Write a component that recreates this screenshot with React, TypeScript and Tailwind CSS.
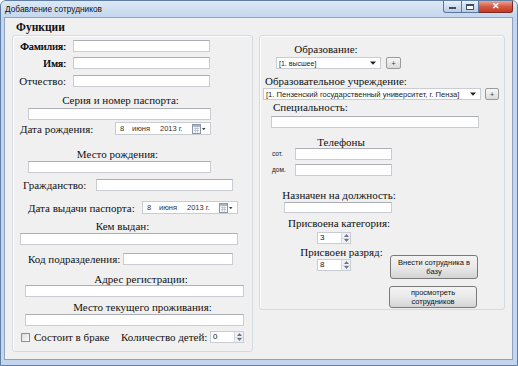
const serif = "font-['Liberation_Serif',serif] text-[11px] leading-[12px] text-[#111] whitespace-nowrap";
const sans = "font-['Liberation_Sans',Arial,sans-serif]";

function Field({ className = "" }: { className?: string }) {
  return <div className={`h-[12px] shrink-0 border border-[#c9ccd3] border-t-[#abaeb6] bg-white ${className}`} />;
}

function CalIcon() {
  return (
    <svg width="14" height="10" viewBox="0 0 14 10" className="shrink-0">
      <rect x="0.5" y="0.5" width="8" height="9" fill="#f4f6f9" stroke="#8c97a6" />
      <rect x="1" y="1" width="7" height="2" fill="#aab6c6" />
      <path d="M2 4.5h5M2 6.5h5M3.5 3.5v5M5.5 3.5v5" stroke="#b9c2ce" strokeWidth="0.8" />
      <path d="M10 4h3.5l-1.75 2.2z" fill="#444" />
    </svg>
  );
}

function DatePick() {
  return (
    <div className={`flex h-[13px] w-[96px] shrink-0 items-center border border-[#c9ccd3] bg-white text-[7.5px] leading-[9px] text-[#333] ${sans}`}>
      <span className="ml-[4px] w-[12px]">8</span>
      <span className="w-[28px]">июня</span>
      <span className="w-[32px]">2013 г.</span>
      <CalIcon />
    </div>
  );
}

function Arrow() {
  return (
    <svg width="6" height="4" viewBox="0 0 6 4" className="shrink-0">
      <path d="M0 0.5h6L3 3.8z" fill="#222" />
    </svg>
  );
}

function Combo({ text, className = "" }: { text: string; className?: string }) {
  return (
    <div className={`flex h-[12px] shrink-0 items-center justify-between border border-[#c9ccd3] bg-white pl-[2px] pr-[4px] leading-[9px] text-[#222] ${sans} ${className}`}>
      <span className="whitespace-nowrap">{text}</span>
      <Arrow />
    </div>
  );
}

function PlusBtn({ className = "" }: { className?: string }) {
  return (
    <div className={`flex h-[12px] shrink-0 items-center justify-center rounded-[2px] border border-[#9a9a9a] bg-linear-to-b from-[#f7f7f7] to-[#dadada] text-[7px] leading-[7px] text-[#333] ${sans} ${className}`}>
      +
    </div>
  );
}

function Numeric({ value, className = "" }: { value: string; className?: string }) {
  return (
    <div className={`flex h-[12px] w-[34px] shrink-0 items-stretch border border-[#c9ccd3] bg-white ${className}`}>
      <span className={`pl-[2px] text-[8px] leading-[10px] text-[#111] ${sans}`}>{value}</span>
      <div className="ml-auto flex w-[9px] flex-col border-l border-[#d5d8de]">
        <div className="flex flex-1 items-center justify-center border-b border-[#d5d8de] bg-[#eff1f4]">
          <svg width="5" height="3" viewBox="0 0 5 3"><path d="M0 3L2.5 0L5 3z" fill="#6a778a" /></svg>
        </div>
        <div className="flex flex-1 items-center justify-center bg-[#eff1f4]">
          <svg width="5" height="3" viewBox="0 0 5 3"><path d="M0 0L2.5 3L5 0z" fill="#6a778a" /></svg>
        </div>
      </div>
    </div>
  );
}

function WinButton({ lines, className = "" }: { lines: string[]; className?: string }) {
  return (
    <div className={`flex w-[88px] shrink-0 flex-col items-center justify-center rounded-[3px] border border-[#7a7a7a] bg-linear-to-b from-[#f3f3f3] via-[#e9e9e9] to-[#d4d4d4] text-[7.5px] leading-[9px] text-[#111] ${sans} ${className}`}>
      {lines.map((l) => (
        <span key={l}>{l}</span>
      ))}
    </div>
  );
}

function LeftGroup() {
  return (
    <div className="flex h-[317px] w-[241px] shrink-0 flex-col rounded-[3px] border border-[#d3dbe0] shadow-[inset_1px_1px_0_#fff]">
      <div className="mt-[4px] flex h-[12px] items-center">
        <span className={`w-[53px] text-right [text-shadow:0.35px_0_0_#111] ${serif}`}>Фамилия:</span>
        <Field className="ml-[7px] w-[137px]" />
      </div>
      <div className="mt-[5px] flex h-[12px] items-center">
        <span className={`w-[53px] text-right [text-shadow:0.35px_0_0_#111] ${serif}`}>Имя:</span>
        <Field className="ml-[7px] w-[137px]" />
      </div>
      <div className="mt-[6px] flex h-[12px] items-center">
        <span className={`w-[53px] text-right ${serif}`}>Отчество:</span>
        <Field className="ml-[7px] w-[137px]" />
      </div>
      <div className={`mt-[7px] h-[12px] w-[215px] text-center ${serif}`}>Серия и номер паспорта:</div>
      <Field className="ml-[15px] mt-[2px] w-[183px]" />
      <div className="mt-[2px] flex h-[13px] items-center">
        <span className={`ml-[7px] w-[95px] ${serif}`}>Дата рождения:</span>
        <DatePick />
      </div>
      <div className={`mt-[13px] h-[12px] w-[209px] text-center ${serif}`}>Место рождения:</div>
      <Field className="ml-[15px] mt-[1px] w-[183px]" />
      <div className="mt-[6px] flex h-[12px] items-center">
        <span className={`ml-[10px] w-[73px] ${serif}`}>Гражданство:</span>
        <Field className="w-[137px]" />
      </div>
      <div className="mt-[10px] flex h-[13px] items-center">
        <span className={`ml-[15px] w-[114px] ${serif}`}>Дата выдачи паспорта:</span>
        <DatePick />
      </div>
      <div className={`mt-[6px] h-[12px] w-[219px] text-center ${serif}`}>Кем выдан:</div>
      <Field className="ml-[7px] mt-[1px] w-[218px]" />
      <div className="mt-[8px] flex h-[12px] items-center">
        <span className={`ml-[15px] w-[95px] ${serif}`}>Код подразделения:</span>
        <Field className="w-[110px]" />
      </div>
      <div className={`ml-[20px] mt-[8px] h-[12px] w-[216px] text-center ${serif}`}>Адрес регистрации:</div>
      <Field className="ml-[12px] w-[219px]" />
      <div className={`ml-[20px] mt-[4px] h-[12px] w-[219px] text-center ${serif}`}>Место текущего проживания:</div>
      <Field className="ml-[12px] mt-[1px] w-[219px]" />
      <div className="mt-[5px] flex h-[12px] items-center">
        <div className="ml-[8px] h-[9px] w-[9px] shrink-0 border border-[#8e8f8f] bg-linear-to-br from-[#dcdcdc] to-[#fbfbfb]" />
        <span className={`ml-[4px] w-[87px] ${serif}`}>Состоит в браке</span>
        <span className={`w-[89px] ${serif}`}>Количество детей:</span>
        <Numeric value="0" />
      </div>
    </div>
  );
}

function RightGroup() {
  return (
    <div className="ml-[6px] flex h-[275px] w-[246px] shrink-0 flex-col rounded-[3px] border border-[#d3dbe0] shadow-[inset_1px_1px_0_#fff]">
      <div className={`mt-[7px] h-[12px] w-[132px] text-center ${serif}`}>Образование:</div>
      <div className="mt-[2px] flex items-center">
        <Combo text="[1. высшее]" className="ml-[16px] w-[105px] text-[7px]" />
        <PlusBtn className="ml-[5px] w-[15px]" />
      </div>
      <div className={`ml-[5px] mt-[6px] h-[12px] ${serif}`}>Образовательное учреждение:</div>
      <div className="mt-[1px] flex items-center">
        <Combo text="[1. Пензенский государственный университет, г. Пенза]" className="ml-[3px] w-[218px] text-[7.6px]" />
        <PlusBtn className="ml-[4px] w-[14px]" />
      </div>
      <div className={`ml-[13px] mt-[1px] h-[12px] ${serif}`}>Специальность:</div>
      <Field className="ml-[11px] mt-[3px] w-[208px]" />
      <div className={`mt-[8px] h-[12px] w-[162px] text-center ${serif}`}>Телефоны</div>
      <div className="flex h-[12px] items-center">
        <span className={`ml-[12px] w-[23px] text-[6.5px] text-[#222] ${sans}`}>сот.</span>
        <Field className="w-[97px]" />
      </div>
      <div className="mt-[4px] flex h-[12px] items-center">
        <span className={`ml-[12px] w-[23px] text-[6.5px] text-[#222] ${sans}`}>дом.</span>
        <Field className="w-[97px]" />
      </div>
      <div className={`mt-[13px] h-[12px] w-[158px] text-center ${serif}`}>Назначен на должность:</div>
      <Field className="ml-[24px] mt-[1px] !h-[11px] w-[108px]" />
      <div className="mt-[2px] flex items-start">
        <div className="flex w-[129px] shrink-0 flex-col">
          <div className={`mt-[2px] h-[12px] w-[158px] text-center ${serif}`}>Присвоена категория:</div>
          <Numeric value="3" className="ml-[57px] mt-[3px]" />
          <div className={`mt-[2px] h-[12px] w-[163px] text-center ${serif}`}>Присвоен разряд:</div>
          <Numeric value="8" className="ml-[57px] mt-[1px]" />
        </div>
        <div className="flex flex-col">
          <WinButton lines={["Внести сотрудника в", "базу"]} className="ml-[1px] mt-[40px] h-[24px]" />
          <WinButton lines={["просмотреть", "сотрудников"]} className="mt-[7px] h-[22px]" />
        </div>
      </div>
    </div>
  );
}

export default function App() {
  return (
    <div className="flex h-[366px] w-[518px] flex-col overflow-hidden rounded-t-[6px] border border-[#5f7ea5] bg-[#c3d6ee]">
      <div className="flex h-[16px] shrink-0 items-start bg-linear-to-b from-[#dde8f5] to-[#c4d7ee]">
        <span className={`ml-[4px] mt-[3px] text-[8.3px] leading-[11px] text-[#111] ${sans}`}>Добавление сотрудников</span>
        <div className="ml-auto mr-[4px] flex">
          <div className="flex h-[12px] w-[19px] items-center justify-center rounded-bl-[3px] border border-t-0 border-[#5c7598] bg-linear-to-b from-[#e9f0f9] to-[#b9cce4]">
            <div className="mt-[3px] h-[2px] w-[7px] border border-[#3b4f6b] bg-white" />
          </div>
          <div className="flex h-[12px] w-[17px] items-center justify-center border border-l-0 border-t-0 border-[#5c7598] bg-linear-to-b from-[#e9f0f9] to-[#b9cce4]">
            <div className="h-[6px] w-[8px] border border-t-2 border-[#3b4f6b] bg-white" />
          </div>
          <div className="flex h-[12px] w-[34px] items-center justify-center rounded-br-[3px] border border-l-0 border-t-0 border-[#7a2a20] bg-linear-to-b from-[#eaa598] via-[#d35a43] to-[#c23c28]">
            <span className={`text-[9px] font-bold leading-[9px] text-white ${sans}`}>✕</span>
          </div>
        </div>
      </div>
      <div className="ml-[3px] flex h-[343px] w-[509px] shrink-0 flex-col border border-[#8ea3bf] bg-[#f0f0f0]">
        <div className={`ml-[11px] mt-[3px] h-[14px] font-bold !text-[11.5px] ${serif}`}>Функции</div>
        <div className="ml-[7px] flex items-start">
          <LeftGroup />
          <RightGroup />
        </div>
      </div>
    </div>
  );
}
